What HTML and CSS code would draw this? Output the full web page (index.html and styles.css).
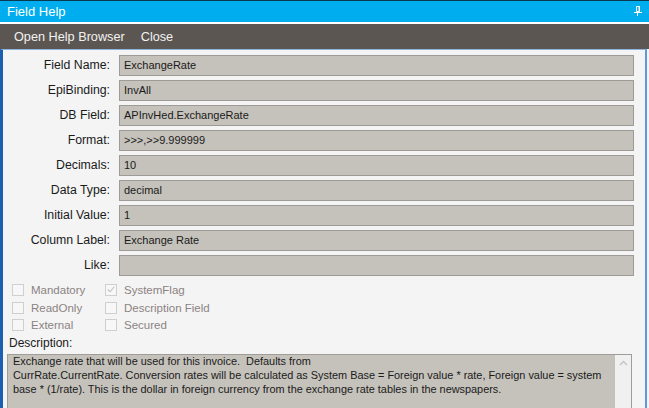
FILE: index.html
```html
<!DOCTYPE html>
<html>
<head>
<meta charset="utf-8">
<link rel="stylesheet" href="styles.css">
</head>
<body>
<div class="window">
  <div class="titlebar">
    <span class="title">Field Help</span>
    <svg class="pin" width="10" height="12" viewBox="0 0 10 12">
      <path d="M3.5 1.5 H6.5 V6.5 H3.5 Z" fill="none" stroke="#ffffff" stroke-width="1"/>
      <path d="M1 7.5 H9" stroke="#ffffff" stroke-width="1"/>
      <path d="M4.5 8 V11" stroke="#ffffff" stroke-width="1"/>
      <path d="M6 1.5 V6.5" stroke="#ffffff" stroke-width="1"/>
    </svg>
  </div>
  <div class="sep"></div>
  <div class="toolbar">
    <span class="tool">Open Help Browser</span>
    <span class="tool">Close</span>
  </div>
  <div class="content">
    <div class="form">
      <div class="label">Field Name:</div><div class="field">ExchangeRate</div>
      <div class="label">EpiBinding:</div><div class="field">InvAll</div>
      <div class="label">DB Field:</div><div class="field">APInvHed.ExchangeRate</div>
      <div class="label">Format:</div><div class="field">&gt;&gt;&gt;,&gt;&gt;9.999999</div>
      <div class="label">Decimals:</div><div class="field">10</div>
      <div class="label">Data Type:</div><div class="field">decimal</div>
      <div class="label">Initial Value:</div><div class="field">1</div>
      <div class="label">Column Label:</div><div class="field">Exchange Rate</div>
      <div class="label">Like:</div><div class="field"></div>
    </div>
    <div class="checks">
      <div class="check"><span class="box"></span>Mandatory</div>
      <div class="check"><span class="box checked"><svg width="11" height="11" viewBox="0 0 11 11"><path d="M2 5.5 L4.5 8 L9 2.5" fill="none" stroke="#c0c0c0" stroke-width="1.2"/></svg></span>SystemFlag</div>
      <div class="check"><span class="box"></span>ReadOnly</div>
      <div class="check"><span class="box"></span>Description Field</div>
      <div class="check"><span class="box"></span>External</div>
      <div class="check"><span class="box"></span>Secured</div>
    </div>
    <div class="desc-label">Description:</div>
    <div class="desc">
      <div class="desc-text">Exchange rate that will be used for this invoice.&nbsp; Defaults from<br>CurrRate.CurrentRate. Conversion rates will be calculated as System Base = Foreign value * rate, Foreign value = system<br>base * (1/rate). This is the dollar in foreign currency from the exchange rate tables in the newspapers.</div>
      <div class="scroll">
        <svg width="9" height="6" viewBox="0 0 9 6"><path d="M1 5 L4.5 1.5 L8 5" fill="none" stroke="#c2c2c2" stroke-width="1.3"/></svg>
      </div>
    </div>
  </div>
</div>
</body>
</html>
```

FILE: styles.css
```css
html, body {
  margin: 0;
  padding: 0;
}
body {
  width: 649px;
  height: 408px;
  overflow: hidden;
  background: #f4f4f4;
  font-family: "Liberation Sans", Arial, sans-serif;
  color: #1a1a1a;
}
.window {
  display: flex;
  flex-direction: column;
  height: 408px;
}
.titlebar {
  flex-shrink: 0;
  height: 21px;
  border-top: 1px solid #0b3a4e;
  background: #00aeef;
  display: flex;
  align-items: center;
  justify-content: space-between;
  padding: 0 6px 0 7px;
}
.title {
  color: #ffffff;
  font-size: 13px;
}
.pin {
  display: block;
  margin-top: -2px;
}
.sep {
  flex-shrink: 0;
  height: 2px;
  background: #ffffff;
}
.toolbar {
  flex-shrink: 0;
  height: 25px;
  background: #5b5651;
  display: flex;
  align-items: center;
  gap: 16px;
  padding-left: 14px;
}
.tool {
  color: #f2f2f2;
  font-size: 12.7px;
}
.content {
  flex: 1;
  min-height: 0;
  overflow: hidden;
  border-left: 3px solid #1c5fb0;
  border-right: 2px solid #5d9ad8;
  border-top: 1px solid #8fb5de;
  margin-right: 2px;
  padding-top: 5px;
}
.form {
  display: grid;
  grid-template-columns: 107px 515px;
  column-gap: 9px;
  row-gap: 4px;
  grid-auto-rows: 21px;
}
.label {
  font-size: 12.3px;
  text-align: right;
  line-height: 21px;
}
.field {
  box-sizing: border-box;
  height: 21px;
  background: #c5c2bb;
  border: 1px solid #9e9b96;
  font-size: 11px;
  line-height: 19px;
  padding-left: 4px;
}
.checks {
  display: grid;
  grid-template-columns: 93px 200px;
  grid-auto-rows: 17.7px;
  margin-top: 5px;
  padding-left: 9px;
}
.check {
  display: flex;
  align-items: center;
  font-size: 11.5px;
  color: #8b8383;
}
.box {
  box-sizing: border-box;
  width: 12px;
  height: 12px;
  border: 1px solid #cfcfcf;
  background: #f7f7f7;
  margin-right: 7px;
  display: flex;
  align-items: center;
  justify-content: center;
}
.box svg {
  display: block;
}
.desc-label {
  font-size: 12px;
  padding-left: 6px;
  margin-top: 2px;
  line-height: 15px;
}
.desc {
  margin: 3px 0 0 4px;
  width: 625px;
  box-sizing: border-box;
  height: 80px;
  background: #c5c2bb;
  border: 1px solid #a09d98;
  display: flex;
}
.desc-text {
  flex: 1;
  font-size: 10.9px;
  line-height: 13.8px;
  padding: 0 0 0 5px;
  white-space: nowrap;
}
.scroll {
  width: 16px;
  background: #f0f0f0;
  display: flex;
  justify-content: center;
  padding-top: 5px;
  align-items: flex-start;
}
.scroll svg {
  display: block;
}
```
